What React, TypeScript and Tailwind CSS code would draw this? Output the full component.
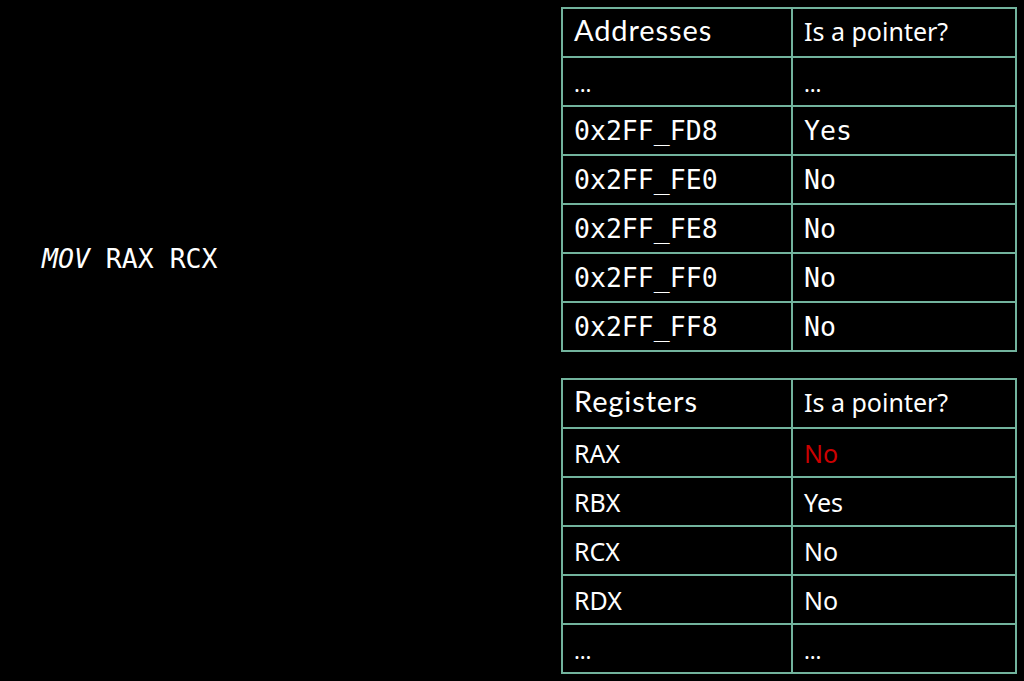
import React from 'react'

const ADDRESSES = [
  { a: "…", p: "…", dots: true },
  { a: "0x2FF_FD8", p: "Yes" },
  { a: "0x2FF_FE0", p: "No" },
  { a: "0x2FF_FE8", p: "No" },
  { a: "0x2FF_FF0", p: "No" },
  { a: "0x2FF_FF8", p: "No" },
];

const REGISTERS = [
  { r: "RAX", p: "No", red: true },
  { r: "RBX", p: "Yes" },
  { r: "RCX", p: "No" },
  { r: "RDX", p: "No" },
  { r: "…", p: "…", dots: true },
];

const cell = "border-2 border-[#72b39d] h-[49px] px-[11px] py-0 leading-[1.2] align-middle";
const head = " font-['Lato',sans-serif] text-[29px] tracking-[0.9px] pb-[5px]";
const question = " font-['Noto_Sans',sans-serif] text-[25px] pb-[3px]";
const mono = " font-['DejaVu_Sans_Mono',monospace] text-[26.5px]";
const dots = " font-['Noto_Sans',sans-serif] text-[22px] pt-[3px]";
const sans = " font-['Noto_Sans',sans-serif] text-[25px]";

export default function App() {
  return (
    <div className="w-[1024px] h-[681px] bg-black text-white flex overflow-hidden">
      <div className="pl-[42px] pt-[246px] font-['DejaVu_Sans_Mono',monospace] text-[26.5px] leading-none">
        <span className="italic">MOV</span> RAX RCX
      </div>

      <div className="ml-auto mr-[7px] pt-[7px] flex flex-col gap-[26px]">
        <table className="table-fixed border-collapse w-[454px]">
          <colgroup>
            <col className="w-[230px]" />
            <col className="w-[224px]" />
          </colgroup>
          <tbody>
            <tr>
              <td className={cell + head}>Addresses</td>
              <td className={cell + question}>Is a pointer?</td>
            </tr>
            {ADDRESSES.map((row, i) => (
              <tr key={i}>
                <td className={cell + (row.dots ? dots : mono)}>{row.a}</td>
                <td className={cell + (row.dots ? dots : mono)}>{row.p}</td>
              </tr>
            ))}
          </tbody>
        </table>

        <table className="table-fixed border-collapse w-[454px]">
          <colgroup>
            <col className="w-[230px]" />
            <col className="w-[224px]" />
          </colgroup>
          <tbody>
            <tr>
              <td className={cell + head}>Registers</td>
              <td className={cell + question}>Is a pointer?</td>
            </tr>
            {REGISTERS.map((row, i) => (
              <tr key={i}>
                <td className={cell + (row.dots ? dots : sans)}>{row.r}</td>
                <td className={cell + (row.dots ? dots : sans) + (row.red ? " text-[#cc0000]" : "")}>{row.p}</td>
              </tr>
            ))}
          </tbody>
        </table>
      </div>
    </div>
  );
}
